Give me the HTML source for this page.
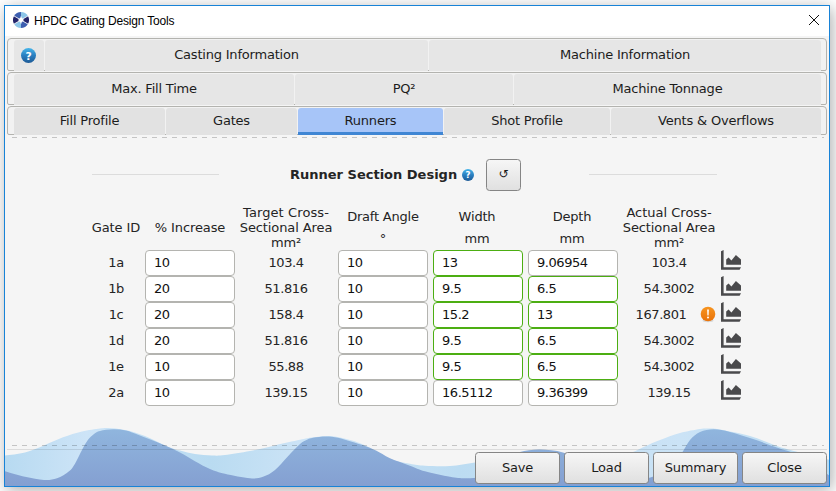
<!DOCTYPE html>
<html><head><meta charset="utf-8"><title>HPDC Gating Design Tools</title>
<style>
*{box-sizing:border-box;margin:0;padding:0}
html,body{width:836px;height:491px;overflow:hidden;background:#fff}
body{position:relative;font-family:"DejaVu Sans","Liberation Sans",sans-serif;font-size:13px;color:#242424;letter-spacing:-0.2px}
#win{position:absolute;left:4px;top:5px;width:826px;height:482px;border:1px solid #1883d7;background:#f5f5f5;box-shadow:2px 3px 15px rgba(0,0,0,.33);overflow:hidden}
/* everything inside #inner uses full-image coordinates */
#inner{position:absolute;left:-5px;top:-6px;width:836px;height:491px}
#title{position:absolute;left:5px;top:6px;width:824px;height:30px;background:#fff}
#title .t{position:absolute;left:29px;top:8px;font-family:"Liberation Sans",sans-serif;font-size:12px;letter-spacing:-0.17px;color:#000;white-space:nowrap;line-height:15px}
.frame{position:absolute;left:7px;width:820px;border:1px solid #b3b3af;border-radius:4px 4px 2px 2px;background:#f2f2f2}
.tab{position:absolute;top:1px;bottom:0;background:#e6e6e6;border-radius:3px 3px 0 0;text-align:center;white-space:nowrap;color:#1c1c1c}
.tab span{position:absolute;left:0;right:0;top:50%;margin-top:-9px;line-height:16px}
.tab.r3{background:#e2e2e2}
.tab.sel{background:linear-gradient(#a7c5f8,#a7c5f8 24px,#3f86d4 24px)}
.dash{position:absolute;left:12px;width:812px;height:1px;background:repeating-linear-gradient(90deg,rgba(0,0,0,.2) 0,rgba(0,0,0,.2) 5px,transparent 5px,transparent 10px)}
.hr{position:absolute;height:1px;background:#dcdcdc}
.lbl{position:absolute;white-space:nowrap;text-align:center;line-height:15px}
.inp{position:absolute;width:90px;height:26px;border:1px solid #b4b4b0;border-radius:4px;background:#fff;padding-left:8px;line-height:24px;white-space:nowrap;color:#111;letter-spacing:-0.45px}
.inp.g{border-color:#4cae12}
.val{position:absolute;text-align:center;line-height:16px;white-space:nowrap;letter-spacing:-0.4px}
.btn{position:absolute;top:452px;width:85px;height:32px;border:1px solid #858585;border-radius:3.5px;background:linear-gradient(#f6f6f6,#e0e0e0);text-align:center;line-height:29px;color:#1c1c1c}
</style></head><body>
<div id="win"><div id="inner">
<div id="title">
<svg style="position:absolute;left:8px;top:6px" width="16" height="16" viewBox="-8 -8 16 16">
<path d="M0 0L-6.93 -4 A8 8 0 0 1 0 -8Z" fill="#3d5fb0"/>
<path d="M0 0L0 -8 A8 8 0 0 1 6.93 -4Z" fill="#8cc5e8"/>
<path d="M0 0L6.93 -4 A8 8 0 0 1 6.93 4Z" fill="#23246b"/>
<path d="M0 0L6.93 4 A8 8 0 0 1 0 8Z" fill="#3d5fb0"/>
<path d="M0 0L0 8 A8 8 0 0 1 -6.93 4Z" fill="#8cc5e8"/>
<path d="M0 0L-6.93 4 A8 8 0 0 1 -6.93 -4Z" fill="#23246b"/>
<path d="M-6.93 -4L6.93 4M-6.93 4L6.93 -4" stroke="#fff" stroke-width=".8"/>
<path d="M0 -4.2L1 -1.6L3.2 0L1 1.6L0 4.2L-1 1.6L-3.2 0L-1 -1.6Z" fill="#fff"/>
<circle r="2.1" fill="#fff"/>
</svg>
<div class="t">HPDC Gating Design Tools</div>
<svg style="position:absolute;left:803px;top:8px" width="12" height="12" viewBox="0 0 12 12"><path d="M1 1L11 11M11 1L1 11" stroke="#111" stroke-width="1" fill="none"/></svg>
</div>
<div class="frame" style="top:38px;height:33px"></div>
<div class="frame" style="top:72px;height:33px"></div>
<div class="frame" style="top:106px;height:29px"></div>
<div class="tab" style="left:14px;width:30px;top:40px;height:31px"><svg width="15" height="15" viewBox="0 0 16 16" style="position:absolute;left:50%;top:50%;margin:-7.2px 0 0 -8.1px"><defs><linearGradient id="qg" x1="0" y1="0" x2="0" y2="1"><stop offset="0" stop-color="#46b5ea"/><stop offset=".5" stop-color="#2a7fc0"/><stop offset="1" stop-color="#1d5a96"/></linearGradient></defs><circle cx="8" cy="8" r="8" fill="url(#qg)"/><text x="8" y="12.3" text-anchor="middle" font-family="DejaVu Sans,sans-serif" font-weight="700" font-size="11.5" fill="#fff">?</text></svg></div>
<div class="tab " style="left:45px;width:383px;top:40px;height:31px"><span>Casting Information</span></div>
<div class="tab " style="left:429px;width:392px;top:40px;height:31px"><span>Machine Information</span></div>
<div class="tab " style="left:14px;width:280px;top:74px;height:31px"><span>Max. Fill Time</span></div>
<div class="tab " style="left:295px;width:218px;top:74px;height:31px"><span>PQ²</span></div>
<div class="tab " style="left:514px;width:307px;top:74px;height:31px"><span>Machine Tonnage</span></div>
<div class="tab r3" style="left:14px;width:151px;top:108px;height:27px"><span>Fill Profile</span></div>
<div class="tab r3" style="left:166px;width:131px;top:108px;height:27px"><span>Gates</span></div>
<div class="tab r3 sel" style="left:298px;width:145px;top:108px;height:27px"><span>Runners</span></div>
<div class="tab r3" style="left:444px;width:166px;top:108px;height:27px"><span>Shot Profile</span></div>
<div class="tab r3" style="left:611px;width:210px;top:108px;height:27px"><span>Vents &amp; Overflows</span></div>
<div class="dash" style="top:137px"></div>
<div class="hr" style="left:92px;width:127px;top:174px"></div>
<div class="hr" style="left:589px;width:128px;top:174px"></div>
<div class="lbl" style="left:290px;top:167px;font-weight:700;text-align:left;letter-spacing:0">Runner Section Design</div>
<svg width="12" height="12" viewBox="0 0 16 16" style="position:absolute;left:462px;top:169.4px"><circle cx="8" cy="8" r="8" fill="url(#qg)"/><text x="8" y="12.3" text-anchor="middle" font-family="DejaVu Sans,sans-serif" font-weight="700" font-size="11.5" fill="#fff">?</text></svg>
<div class="btn" style="left:486px;top:159px;width:35px;height:32px;line-height:28px;font-size:12px">↺</div>
<div class="lbl" style="left:56px;width:120px;top:220px;letter-spacing:-0.1px">Gate ID</div>
<div class="lbl" style="left:130px;width:120px;top:220px;letter-spacing:-0.1px">% Increase</div>
<div class="lbl" style="left:226px;width:120px;top:205px;letter-spacing:0.1px">Target Cross-</div>
<div class="lbl" style="left:226px;width:120px;top:220px;letter-spacing:-0.1px">Sectional Area</div>
<div class="lbl" style="left:226px;width:120px;top:235px">mm²</div>
<div class="lbl" style="left:323px;width:120px;top:209px">Draft Angle</div>
<div class="lbl" style="left:323px;width:120px;top:231px">°</div>
<div class="lbl" style="left:417px;width:120px;top:209px">Width</div>
<div class="lbl" style="left:417px;width:120px;top:231px">mm</div>
<div class="lbl" style="left:512px;width:120px;top:209px">Depth</div>
<div class="lbl" style="left:512px;width:120px;top:231px">mm</div>
<div class="lbl" style="left:609px;width:120px;top:205px;letter-spacing:0px">Actual Cross-</div>
<div class="lbl" style="left:609px;width:120px;top:220px;letter-spacing:-0.1px">Sectional Area</div>
<div class="lbl" style="left:609px;width:120px;top:235px">mm²</div>
<div class="val" style="left:86px;width:60px;top:255px">1a</div><div class="inp" style="left:145px;top:250px">10</div><div class="val" style="left:236px;width:100px;top:255px">103.4</div><div class="inp" style="left:338px;top:250px">10</div><div class="inp g" style="left:433px;top:250px">13</div><div class="inp" style="left:528px;top:250px">9.06954</div><div class="val" style="left:619px;width:100px;top:255px">103.4</div><svg class="ch" width="20" height="20" viewBox="0 0 20 20" style="position:absolute;left:721px;top:250px"><path d="M0 1.2L2.6 0V17.3H20L18.6 19.8H0Z" fill="#4a4a4c"/><path d="M5.2 14.7V9.4L7.6 7.6L10.4 10.4L14.9 5L20 9.4V14.7Z" fill="#4a4a4c"/></svg>
<div class="val" style="left:86px;width:60px;top:281px">1b</div><div class="inp" style="left:145px;top:276px">20</div><div class="val" style="left:236px;width:100px;top:281px">51.816</div><div class="inp" style="left:338px;top:276px">10</div><div class="inp g" style="left:433px;top:276px">9.5</div><div class="inp g" style="left:528px;top:276px">6.5</div><div class="val" style="left:619px;width:100px;top:281px">54.3002</div><svg class="ch" width="20" height="20" viewBox="0 0 20 20" style="position:absolute;left:721px;top:276px"><path d="M0 1.2L2.6 0V17.3H20L18.6 19.8H0Z" fill="#4a4a4c"/><path d="M5.2 14.7V9.4L7.6 7.6L10.4 10.4L14.9 5L20 9.4V14.7Z" fill="#4a4a4c"/></svg>
<div class="val" style="left:86px;width:60px;top:307px">1c</div><div class="inp" style="left:145px;top:302px">20</div><div class="val" style="left:236px;width:100px;top:307px">158.4</div><div class="inp" style="left:338px;top:302px">10</div><div class="inp g" style="left:433px;top:302px">15.2</div><div class="inp g" style="left:528px;top:302px">13</div><div class="val" style="left:611px;width:100px;top:307px">167.801</div><svg class="ch" width="20" height="20" viewBox="0 0 20 20" style="position:absolute;left:721px;top:302px"><path d="M0 1.2L2.6 0V17.3H20L18.6 19.8H0Z" fill="#4a4a4c"/><path d="M5.2 14.7V9.4L7.6 7.6L10.4 10.4L14.9 5L20 9.4V14.7Z" fill="#4a4a4c"/></svg>
<div class="val" style="left:86px;width:60px;top:333px">1d</div><div class="inp" style="left:145px;top:328px">20</div><div class="val" style="left:236px;width:100px;top:333px">51.816</div><div class="inp" style="left:338px;top:328px">10</div><div class="inp g" style="left:433px;top:328px">9.5</div><div class="inp g" style="left:528px;top:328px">6.5</div><div class="val" style="left:619px;width:100px;top:333px">54.3002</div><svg class="ch" width="20" height="20" viewBox="0 0 20 20" style="position:absolute;left:721px;top:328px"><path d="M0 1.2L2.6 0V17.3H20L18.6 19.8H0Z" fill="#4a4a4c"/><path d="M5.2 14.7V9.4L7.6 7.6L10.4 10.4L14.9 5L20 9.4V14.7Z" fill="#4a4a4c"/></svg>
<div class="val" style="left:86px;width:60px;top:359px">1e</div><div class="inp" style="left:145px;top:354px">10</div><div class="val" style="left:236px;width:100px;top:359px">55.88</div><div class="inp" style="left:338px;top:354px">10</div><div class="inp g" style="left:433px;top:354px">9.5</div><div class="inp g" style="left:528px;top:354px">6.5</div><div class="val" style="left:619px;width:100px;top:359px">54.3002</div><svg class="ch" width="20" height="20" viewBox="0 0 20 20" style="position:absolute;left:721px;top:354px"><path d="M0 1.2L2.6 0V17.3H20L18.6 19.8H0Z" fill="#4a4a4c"/><path d="M5.2 14.7V9.4L7.6 7.6L10.4 10.4L14.9 5L20 9.4V14.7Z" fill="#4a4a4c"/></svg>
<div class="val" style="left:86px;width:60px;top:385px">2a</div><div class="inp" style="left:145px;top:380px">10</div><div class="val" style="left:236px;width:100px;top:385px">139.15</div><div class="inp" style="left:338px;top:380px">10</div><div class="inp" style="left:433px;top:380px">16.5112</div><div class="inp" style="left:528px;top:380px">9.36399</div><div class="val" style="left:619px;width:100px;top:385px">139.15</div><svg class="ch" width="20" height="20" viewBox="0 0 20 20" style="position:absolute;left:721px;top:380px"><path d="M0 1.2L2.6 0V17.3H20L18.6 19.8H0Z" fill="#4a4a4c"/><path d="M5.2 14.7V9.4L7.6 7.6L10.4 10.4L14.9 5L20 9.4V14.7Z" fill="#4a4a4c"/></svg>
<svg width="16" height="17" viewBox="0 0 16 17" style="position:absolute;left:700px;top:306px"><defs><linearGradient id="og" x1="0" y1="0" x2="0" y2="1"><stop offset="0" stop-color="#f7941f"/><stop offset="1" stop-color="#e9730a"/></linearGradient></defs><ellipse cx="8" cy="14.6" rx="5.5" ry="1.6" fill="#000" opacity=".12"/><circle cx="8" cy="8" r="7.3" fill="url(#og)"/><path d="M7.1 3.5h1.8l-.3 6h-1.2z" fill="#fff"/><circle cx="8" cy="11.4" r="1" fill="#fff"/></svg>
<svg width="836" height="70" viewBox="0 420 836 70" style="position:absolute;left:0;top:420px"><defs><linearGradient id="lw" x1="0" y1="0" x2="1" y2="0"><stop offset="0" stop-color="#b7daf1"/><stop offset=".1" stop-color="#cde4f7"/><stop offset=".25" stop-color="#b9dbf1"/><stop offset=".38" stop-color="#cfe5f7"/><stop offset=".55" stop-color="#bcdcf2"/><stop offset=".82" stop-color="#cbe3f6"/><stop offset="1" stop-color="#b9dbf1"/></linearGradient><linearGradient id="dw" x1="0" y1="428" x2="0" y2="487" gradientUnits="userSpaceOnUse"><stop offset="0" stop-color="#90b6de"/><stop offset="1" stop-color="#849fd1"/></linearGradient></defs><path d="M4 455.6C7.5 455.1 18.3 454.1 25 452.4C31.7 450.7 37.7 447.9 44 445.4C50.3 442.9 56.7 439.6 63 437.3C69.3 435.0 75.8 433.0 82 431.5C88.2 430.0 95.7 429.1 100 428.5C104.3 427.9 103.8 427.8 108 428C112.2 428.2 118.8 428.7 125 430C131.2 431.3 138.3 433.4 145 436C151.7 438.6 159.2 443.0 165 445.4C170.8 447.8 175.0 449.2 180 450.6C185.0 452.0 189.7 453.2 195 454C200.3 454.8 207.0 455.3 212 455.5C217.0 455.7 218.7 455.8 225 455C231.3 454.2 241.7 452.6 250 451C258.3 449.4 266.7 447.3 275 445.4C283.3 443.5 293.7 441.1 300 439.8C306.3 438.5 308.0 437.9 313 437.3C318.0 436.7 323.8 435.6 330 436C336.2 436.4 344.2 438.4 350 440C355.8 441.6 358.3 442.3 365 445.4C371.7 448.5 382.5 455.6 390 458.7C397.5 461.8 404.2 462.5 410 463.7C415.8 464.9 418.3 465.3 425 465.7C431.7 466.1 441.7 466.5 450 466C458.3 465.5 466.7 463.5 475 462.5C483.3 461.5 489.2 460.6 500 460C510.8 459.4 526.7 459.2 540 459C553.3 458.8 569.2 459.2 580 459C590.8 458.8 598.0 458.2 605 457.5C612.0 456.8 617.3 455.9 622 455C626.7 454.1 629.4 453.3 633 452C636.6 450.7 639.1 449.0 643.6 447C648.1 445.0 653.9 442.3 660 440C666.1 437.7 673.3 434.8 680 433C686.7 431.2 695.2 429.8 700 429C704.8 428.2 705.7 428.4 709 428.5C712.3 428.6 713.2 428.2 720 429.5C726.8 430.8 740.5 433.2 750 436C759.5 438.8 769.3 443.4 777 446C784.7 448.6 787.2 449.2 796 451.5C804.8 453.8 824.3 458.6 830 460V490H4Z" fill="url(#lw)"/><path d="M4 471C7.5 472.0 18.3 475.3 25 476.8C31.7 478.3 38.7 479.8 44 480C49.3 480.2 52.8 479.8 57 478.3C61.2 476.9 66.0 473.7 69 471.3C72.0 468.9 72.8 467.2 75 463.7C77.2 460.1 79.8 454.0 82 450C84.2 446.0 86.0 442.5 88 439.8C90.0 437.1 92.0 435.5 94 434C96.0 432.5 96.8 431.8 100 431C103.2 430.2 108.7 429.4 113 429.3C117.3 429.2 121.8 429.6 126 430.5C130.2 431.4 133.8 433.2 138 434.8C142.2 436.4 146.5 438.0 151 439.8C155.5 441.6 160.2 443.3 165 445.4C169.8 447.5 175.0 449.8 180 452.4C185.0 455.0 190.0 458.4 195 461.2C200.0 464.0 205.0 466.9 210 469C215.0 471.1 218.3 472.2 225 473.8C231.7 475.4 243.7 477.8 250 478.3C256.3 478.8 258.8 478.2 263 476.8C267.2 475.4 270.8 473.4 275 470C279.2 466.6 283.8 460.5 288 456.2C292.2 451.9 296.8 446.7 300 444C303.2 441.3 304.8 440.8 307 439.8C309.2 438.8 309.8 438.3 313 437.8C316.2 437.3 321.8 436.6 326 436.6C330.2 436.6 333.8 437.0 338 437.8C342.2 438.6 346.5 440.2 351 441.6C355.5 443.0 360.8 444.5 365 446C369.2 447.5 371.8 448.6 376 450.6C380.2 452.6 384.3 455.7 390 458.2C395.7 460.7 404.2 463.5 410 465.7C415.8 467.9 418.3 469.4 425 471.3C431.7 473.2 443.3 475.6 450 476.8C456.7 478.0 460.0 478.3 465 478.3C470.0 478.3 475.0 478.4 480 477C485.0 475.6 490.3 473.2 495 470C499.7 466.8 503.8 461.0 508 458C512.2 455.0 514.7 453.4 520 452C525.3 450.6 532.8 449.5 540 449.6C547.2 449.7 555.5 450.4 563 452.5C570.5 454.6 577.2 458.4 585 462C592.8 465.6 600.8 471.2 610 474C619.2 476.8 631.7 479.0 640 479C648.3 479.0 654.7 476.3 660 474C665.3 471.7 668.2 468.7 672 465C675.8 461.3 679.5 456.2 682.5 452C685.5 447.8 687.1 443.3 690 440C692.9 436.7 696.0 433.8 700 432C704.0 430.2 709.0 429.3 714 429.3C719.0 429.3 723.7 430.4 730 432C736.3 433.6 743.8 436.0 751.6 438.6C759.4 441.2 768.7 444.5 776.8 447.4C784.9 450.3 791.1 451.2 800 456C808.9 460.8 825.0 472.7 830 476V490H4Z" fill="url(#dw)"/></svg>
<div class="dash" style="top:445px"></div>
<div class="hr" style="left:7px;width:820px;top:449px;background:rgba(0,0,0,.1)"></div>
<div class="btn" style="left:475px">Save</div>
<div class="btn" style="left:564px">Load</div>
<div class="btn" style="left:653px">Summary</div>
<div class="btn" style="left:742px">Close</div>

</div></div>
</body></html>
